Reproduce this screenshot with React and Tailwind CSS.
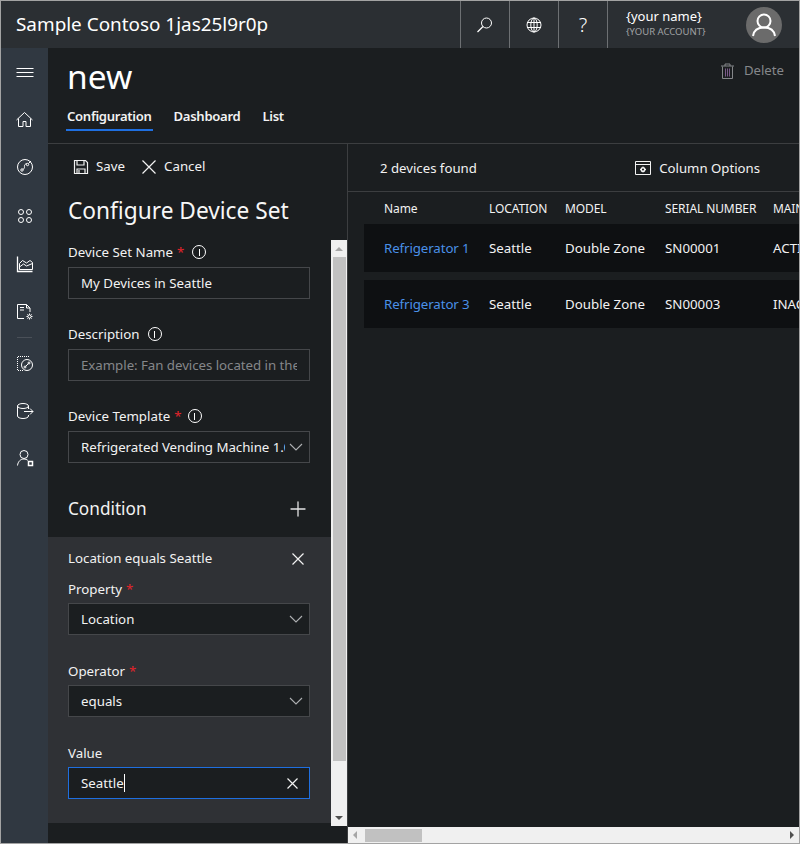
import { Plus } from "lucide-react"

const Stroke = ({ className = "", children, size = 20, box = 20 }) => (
    <svg width={size} height={size} viewBox={`0 0 ${box} ${box}`} fill="none" stroke="currentColor" strokeWidth="1" className={className}>
        {children}
    </svg>
)

const Cross = ({ size, className = "" }) => (
    <svg width={size} height={size} viewBox={`0 0 ${size} ${size}`} fill="none" stroke="currentColor" strokeWidth="1.2" className={`shrink-0 ${className}`}>
        <path d={`M.5.5 ${size - 0.5} ${size - 0.5}M${size - 0.5}.5.5 ${size - 0.5}`} />
    </svg>
)

function NavIcon({ children, className = "" }) {
    return <div className={`h-10 flex items-center justify-center text-white ${className}`}>{children}</div>
}

function Sidebar() {
    return (
        <nav className="w-[47px] shrink-0 bg-[#303841] flex flex-col pt-[5px]">
            <NavIcon>
                <Stroke><path d="M1.500 5.500h17M1.500 9.500h17M1.500 13.500h17" /></Stroke>
            </NavIcon>
            <NavIcon className="mt-[7px]">
                <Stroke><path d="M1.500 10 9.500 2.500l8 7.500M3.500 8.500v8h4.500v-5h3v5h4.500v-8" /></Stroke>
            </NavIcon>
            <NavIcon className="mt-[7px]">
                <Stroke><circle cx="10" cy="10" r="7.500" /><circle cx="7" cy="13" r="1.200" /><circle cx="12.500" cy="7.500" r="1.200" /><path d="M7.800 12.200c3-.5.7-3 2.200-4.700.6-.7 1.300-.8 2-.6M13.500 6.500l2.500-2.500" /></Stroke>
            </NavIcon>
            <NavIcon className="mt-[9px]">
                <Stroke><circle cx="6" cy="6" r="2.500" /><circle cx="14" cy="6" r="2.500" /><circle cx="6" cy="14" r="2.500" /><circle cx="14" cy="14" r="2.500" /></Stroke>
            </NavIcon>
            <NavIcon className="mt-[8px]">
                <Stroke><path d="M2.500 2.500v15h15" strokeWidth="1.300" /><path d="M4.500 15.500v-6l3-3 4 2.500 3.500-2.500 2.500 2v7z" /><path d="m4.500 13 4-3 3 2 6-2.500" /></Stroke>
            </NavIcon>
            <NavIcon className="mt-[8px]">
                <Stroke><path d="M9 16.500H2.500v-14h9l3.500 3.500v4" /><path d="M11.500 2.500V6H15M5 5.500h4M5 8h4" /><circle cx="14.500" cy="14.500" r="1.600" /><path d="M14.500 11.500v1.400M14.500 16.100v1.400M11.500 14.500h1.400M16.100 14.500h1.400M12.400 12.400l1 1M15.600 15.600l1 1M12.400 16.600l1-1M15.600 13.400l1-1" /></Stroke>
            </NavIcon>
            <div className="mx-[16px] h-px bg-[#4a5058] mt-[5px]" />
            <NavIcon className="mt-[6px]">
                <Stroke><path d="M8 16.500H2.500V2.500h12" strokeDasharray="1 1" /><circle cx="12" cy="11" r="5.500" /><circle cx="10" cy="13" r="1" /><circle cx="14" cy="9" r="1" /><path d="M10.500 12.500 13.500 9.500" /></Stroke>
            </NavIcon>
            <NavIcon className="mt-[7px]">
                <Stroke><ellipse cx="8" cy="5" rx="5.500" ry="2.500" /><path d="M2.500 5v10c0 1.400 2.500 2.500 5.500 2.500s5.500-1.100 5.500-2.500v-1M13.500 5v3M9 10.500h9M15 7.500l3 3-3 3" /></Stroke>
            </NavIcon>
            <NavIcon className="mt-[7px]">
                <Stroke><circle cx="9" cy="6.500" r="4" /><path d="M2.500 17.500c.5-4 3-6.500 6.500-6.500 1.500 0 2.800.5 3.800 1.300" /><rect x="13.500" y="13.500" width="4" height="4" strokeWidth="1.500" /></Stroke>
            </NavIcon>
        </nav>
    )
}

function HeaderCell({ children }) {
    return <div className="w-[49px] h-full border-l border-[#6d7073] flex items-center justify-center text-white">{children}</div>
}

function Header() {
    return (
        <header className="h-[47px] shrink-0 bg-[#2b2f33] flex items-center text-white">
            <div className="flex-1 pl-[15px] text-[18.900px] leading-[47px]">Sample Contoso 1jas25l9r0p</div>
            <HeaderCell>
                <Stroke><circle cx="11.500" cy="8" r="5" /><path d="M8 11.500 2.500 17" strokeWidth="1.300" /></Stroke>
            </HeaderCell>
            <HeaderCell>
                <Stroke><circle cx="10" cy="10" r="7" /><ellipse cx="10" cy="10" rx="3.200" ry="7" /><path d="M3 7.500h14M3 12.500h14M10 3v14" /></Stroke>
            </HeaderCell>
            <HeaderCell><span className="text-[20px] font-light">?</span></HeaderCell>
            <div className="w-[192px] h-full border-l border-[#6d7073] flex items-center justify-between pl-[18px] pr-[17px]">
                <div className="flex flex-col mb-[3px]">
                    <span className="text-[13px] leading-[17px]">{"{your name}"}</span>
                    <span className="text-[9.500px] leading-[13px] text-[#a0a2a4]">{"{YOUR ACCOUNT}"}</span>
                </div>
                <div className="w-9 h-9 rounded-full bg-[#6b6b6b] flex items-center justify-center">
                    <Stroke size={28} box={28} className="text-white">
                        <circle cx="14" cy="10" r="6.500" strokeWidth="2" />
                        <path d="M3 25c.8-5.500 5-8.500 11-8.500s10.200 3 11 8.500" strokeWidth="2" />
                    </Stroke>
                </div>
            </div>
        </header>
    )
}

function Tab({ label, active }) {
    return (
        <div className={`h-[26px] px-[1px] text-[13.100px] font-semibold text-[#f2f2f2] leading-[22px] tracking-[-0.3px] ${active ? "border-b-2 border-[#1f6fe0]" : ""}`}>
            {label}
        </div>
    )
}

function PageTop() {
    return (
        <div className="h-[96px] shrink-0 border-b border-[#3c3e40] flex justify-between">
            <div className="pl-[18px]">
                <h1 className="text-[33.500px] leading-[46px] pl-[1px] pt-[5px] h-[52px] text-white">new</h1>
                <div className="flex gap-[20px] mt-[5px]">
                    <Tab label="Configuration" active />
                    <Tab label="Dashboard" />
                    <Tab label="List" />
                </div>
            </div>
            <div className="flex items-start gap-[7px] pr-[15px] pt-[12px] text-[#85878a]">
                <Stroke size={18} box={18} className="mt-[2px]">
                    <path d="M3.500 4.500v12h10v-12M2 4h13M6 4V2h5v2" />
                    <path d="M6.500 6.500v8M8.500 6.500v8M10.500 6.500v8" stroke="#7a5a88" />
                </Stroke>
                <span className="text-[13.200px] leading-[20px]">Delete</span>
            </div>
        </div>
    )
}

function Info() {
    return (
        <span className="w-[14px] h-[14px] rounded-full border border-white flex items-center justify-center text-white">
            <span className="w-px h-[7px] bg-white" />
        </span>
    )
}

function Label({ text, required, info, gap = "ml-[8px]" }) {
    return (
        <div className="h-[20px] flex items-center text-[13.300px] leading-[20px] text-[#f2f2f2]">
            <span>{text}</span>
            {required && <span className="ml-[4px] text-[#e3242b]">*</span>}
            {info && <span className={gap}><Info /></span>}
        </div>
    )
}

function Field({ children, right, className = "border-[#45474a]" }) {
    return (
        <div className={`w-[242px] h-[32px] border flex items-center bg-[#1b1e20] pl-[12px] text-[13.300px] text-[#f2f2f2] ${className}`}>
            <div className="flex-1 min-w-0 pt-[1px] overflow-hidden whitespace-nowrap">{children}</div>
            {right}
        </div>
    )
}

const Chevron = () => (
    <svg width="14" height="8" viewBox="0 0 14 8" fill="none" stroke="#aeb0b2" strokeWidth="1.100" className="ml-[4px] mr-[6px] shrink-0">
        <path d="M1 1l6 6 6-6" />
    </svg>
)

function ConfigForm() {
    return (
        <div className="w-[283px] shrink-0">
            <div className="pl-[20px] pt-[2px]">
                <Label text="Device Set Name" required info />
                <div className="mt-[5px]"><Field>My Devices in Seattle</Field></div>
                <div className="mt-[25px]"><Label text="Description" info /></div>
                <div className="mt-[5px]">
                    <Field right={<span className="w-[12px] shrink-0" />}>
                        <span className="text-[#85878a] tracking-[-0.05px]">Example: Fan devices located in the Seattle area</span>
                    </Field>
                </div>
                <div className="mt-[25px]"><Label text="Device Template" required info gap="ml-[6px]" /></div>
                <div className="mt-[5px]">
                    <Field right={<Chevron />}>
                        <span className="tracking-[-0.05px]">Refrigerated Vending Machine 1.0.0</span>
                    </Field>
                </div>
            </div>
            <div className="h-[74px] pl-[20px] pr-[21px] flex items-center justify-between text-[#f2f2f2]">
                <h2 className="text-[17.200px] leading-[24px] pt-[18px]">Condition</h2>
                <Plus size={24} strokeWidth={1.300} className="mt-[18px] text-[#e4e4e4]" />
            </div>
            <section className="h-[286px] bg-[#2f3135] pl-[20px] pt-[12px]">
                <div className="h-[20px] flex items-center justify-between pr-[27px] text-[13.300px] text-[#f2f2f2]">
                    <span>Location equals Seattle</span>
                    <Cross size={12} />
                </div>
                <div className="mt-[10px]"><Label text="Property" required /></div>
                <div className="mt-[4px]"><Field right={<Chevron />}>Location</Field></div>
                <div className="mt-[26px]"><Label text="Operator" required /></div>
                <div className="mt-[4px]"><Field right={<Chevron />}>equals</Field></div>
                <div className="mt-[26px]"><Label text="Value" /></div>
                <div className="mt-[4px]">
                    <Field className="border-[#1f6fe0]" right={<Cross size={11} className="mr-[11px]" />}>
                        <span className="border-r border-white">Seattle</span>
                    </Field>
                </div>
            </section>
        </div>
    )
}

function VerticalScrollbar() {
    return (
        <div className="w-[16px] shrink-0 bg-[#f0f0f0] flex flex-col items-center">
            <div className="h-[17px] flex items-center justify-center">
                <span className="border-x-4 border-x-transparent border-b-4 border-b-[#a6a6a6]" />
            </div>
            <div className="w-[13px] h-[504px] bg-[#c1c1c1]" />
            <div className="flex-1 flex items-end justify-center pb-[6px]">
                <span className="border-x-4 border-x-transparent border-t-4 border-t-[#505050]" />
            </div>
        </div>
    )
}

function LeftPanel() {
    return (
        <div className="w-[300px] shrink-0 border-r border-[#3c3e40] flex flex-col min-h-0">
            <div className="h-[96px] shrink-0 pl-[20px]">
                <div className="h-[45px] flex items-center text-[13.300px] text-[#f2f2f2] pl-[5px]">
                    <Stroke size={16} box={16}>
                        <path d="M1.500 1.500h11l2 2v11h-13zM4 1.500V6h7V1.500M4 14.500V10h8v4.500M6 11v3" strokeWidth="1.200" />
                    </Stroke>
                    <span className="ml-[7px]">Save</span>
                    <Cross size={14} className="ml-[17px]" />
                    <span className="ml-[8px]">Cancel</span>
                </div>
                <h2 className="text-[22.700px] leading-[30px] text-[#f7f7f7] mt-[7px]">Configure Device Set</h2>
            </div>
            <div className="h-[586px] flex overflow-hidden">
                <ConfigForm />
                <VerticalScrollbar />
            </div>
        </div>
    )
}

const columns = [
    ["w-[105px]", "Name"],
    ["w-[76px]", "LOCATION"],
    ["w-[100px]", "MODEL"],
    ["w-[108px]", "SERIAL NUMBER"],
    ["w-[100px]", "MAINTENANCE"],
]

const rows = [
    ["Refrigerator 1", "Seattle", "Double Zone", "SN00001", "ACTIVE"],
    ["Refrigerator 3", "Seattle", "Double Zone", "SN00003", "INACTIVE"],
]

function DeviceTable() {
    return (
        <div className="flex-1 min-h-0 overflow-hidden pl-[16px]">
            <div className="h-[32px] flex items-center pt-[2px] pl-[20px] w-[600px] text-[12px] text-[#f2f2f2]">
                {columns.map(([width, name]) => (
                    <div key={name} className={`${width} shrink-0 whitespace-nowrap tracking-[-0.1px]`}>{name}</div>
                ))}
            </div>
            {rows.map((row, i) => (
                <div key={row[0]} className={`h-[48px] w-[600px] bg-[#0e1012] flex items-center pt-[1px] pl-[20px] text-[13.300px] text-[#f2f2f2] ${i > 0 ? "mt-[8px]" : ""}`}>
                    {row.map((value, j) => (
                        <div key={j} className={`${columns[j][0]} shrink-0 whitespace-nowrap ${j === 0 ? "text-[#4a90e8] tracking-[-0.1px]" : ""}`}>{value}</div>
                    ))}
                </div>
            ))}
        </div>
    )
}

function HorizontalScrollbar() {
    return (
        <div className="h-[16px] shrink-0 bg-[#f0f0f0] flex items-center justify-between">
            <div className="flex items-center h-full">
                <span className="ml-[5px] border-y-4 border-y-transparent border-r-4 border-r-[#a6a6a6]" />
                <div className="ml-[8px] w-[57px] h-[13px] bg-[#c1c1c1]" />
            </div>
            <span className="mr-[5px] border-y-4 border-y-transparent border-l-4 border-l-[#505050]" />
        </div>
    )
}

function RightPanel() {
    return (
        <div className="flex-1 min-w-0 flex flex-col">
            <div className="h-[48px] shrink-0 border-b border-[#3c3e40] flex items-center justify-between pt-[2px] pl-[32px] pr-[39px] text-[13.200px] text-[#f2f2f2]">
                <span>2 devices found</span>
                <div className="flex items-center gap-[8px]">
                    <Stroke size={16} box={16}>
                        <path d="M.500 1.500h15v13H.500zM.500 4.500h15" />
                        <circle cx="8" cy="9.500" r="1.800" strokeWidth="1.500" />
                        <path d="M8 6.500v1M8 11.500v1M5 9.500h1M10 9.500h1" />
                    </Stroke>
                    <span>Column Options</span>
                </div>
            </div>
            <DeviceTable />
            <HorizontalScrollbar />
        </div>
    )
}

export default function App() {
    return (
        <div className="w-[800px] h-[844px] border border-[#a3a3a3] bg-[#1b1e20] flex flex-col overflow-hidden font-['Noto_Sans','Open_Sans',sans-serif]">
            <Header />
            <div className="flex-1 min-h-0 flex">
                <Sidebar />
                <main className="flex-1 min-w-0 flex flex-col">
                    <PageTop />
                    <div className="flex-1 min-h-0 flex">
                        <LeftPanel />
                        <RightPanel />
                    </div>
                </main>
            </div>
        </div>
    )
}
